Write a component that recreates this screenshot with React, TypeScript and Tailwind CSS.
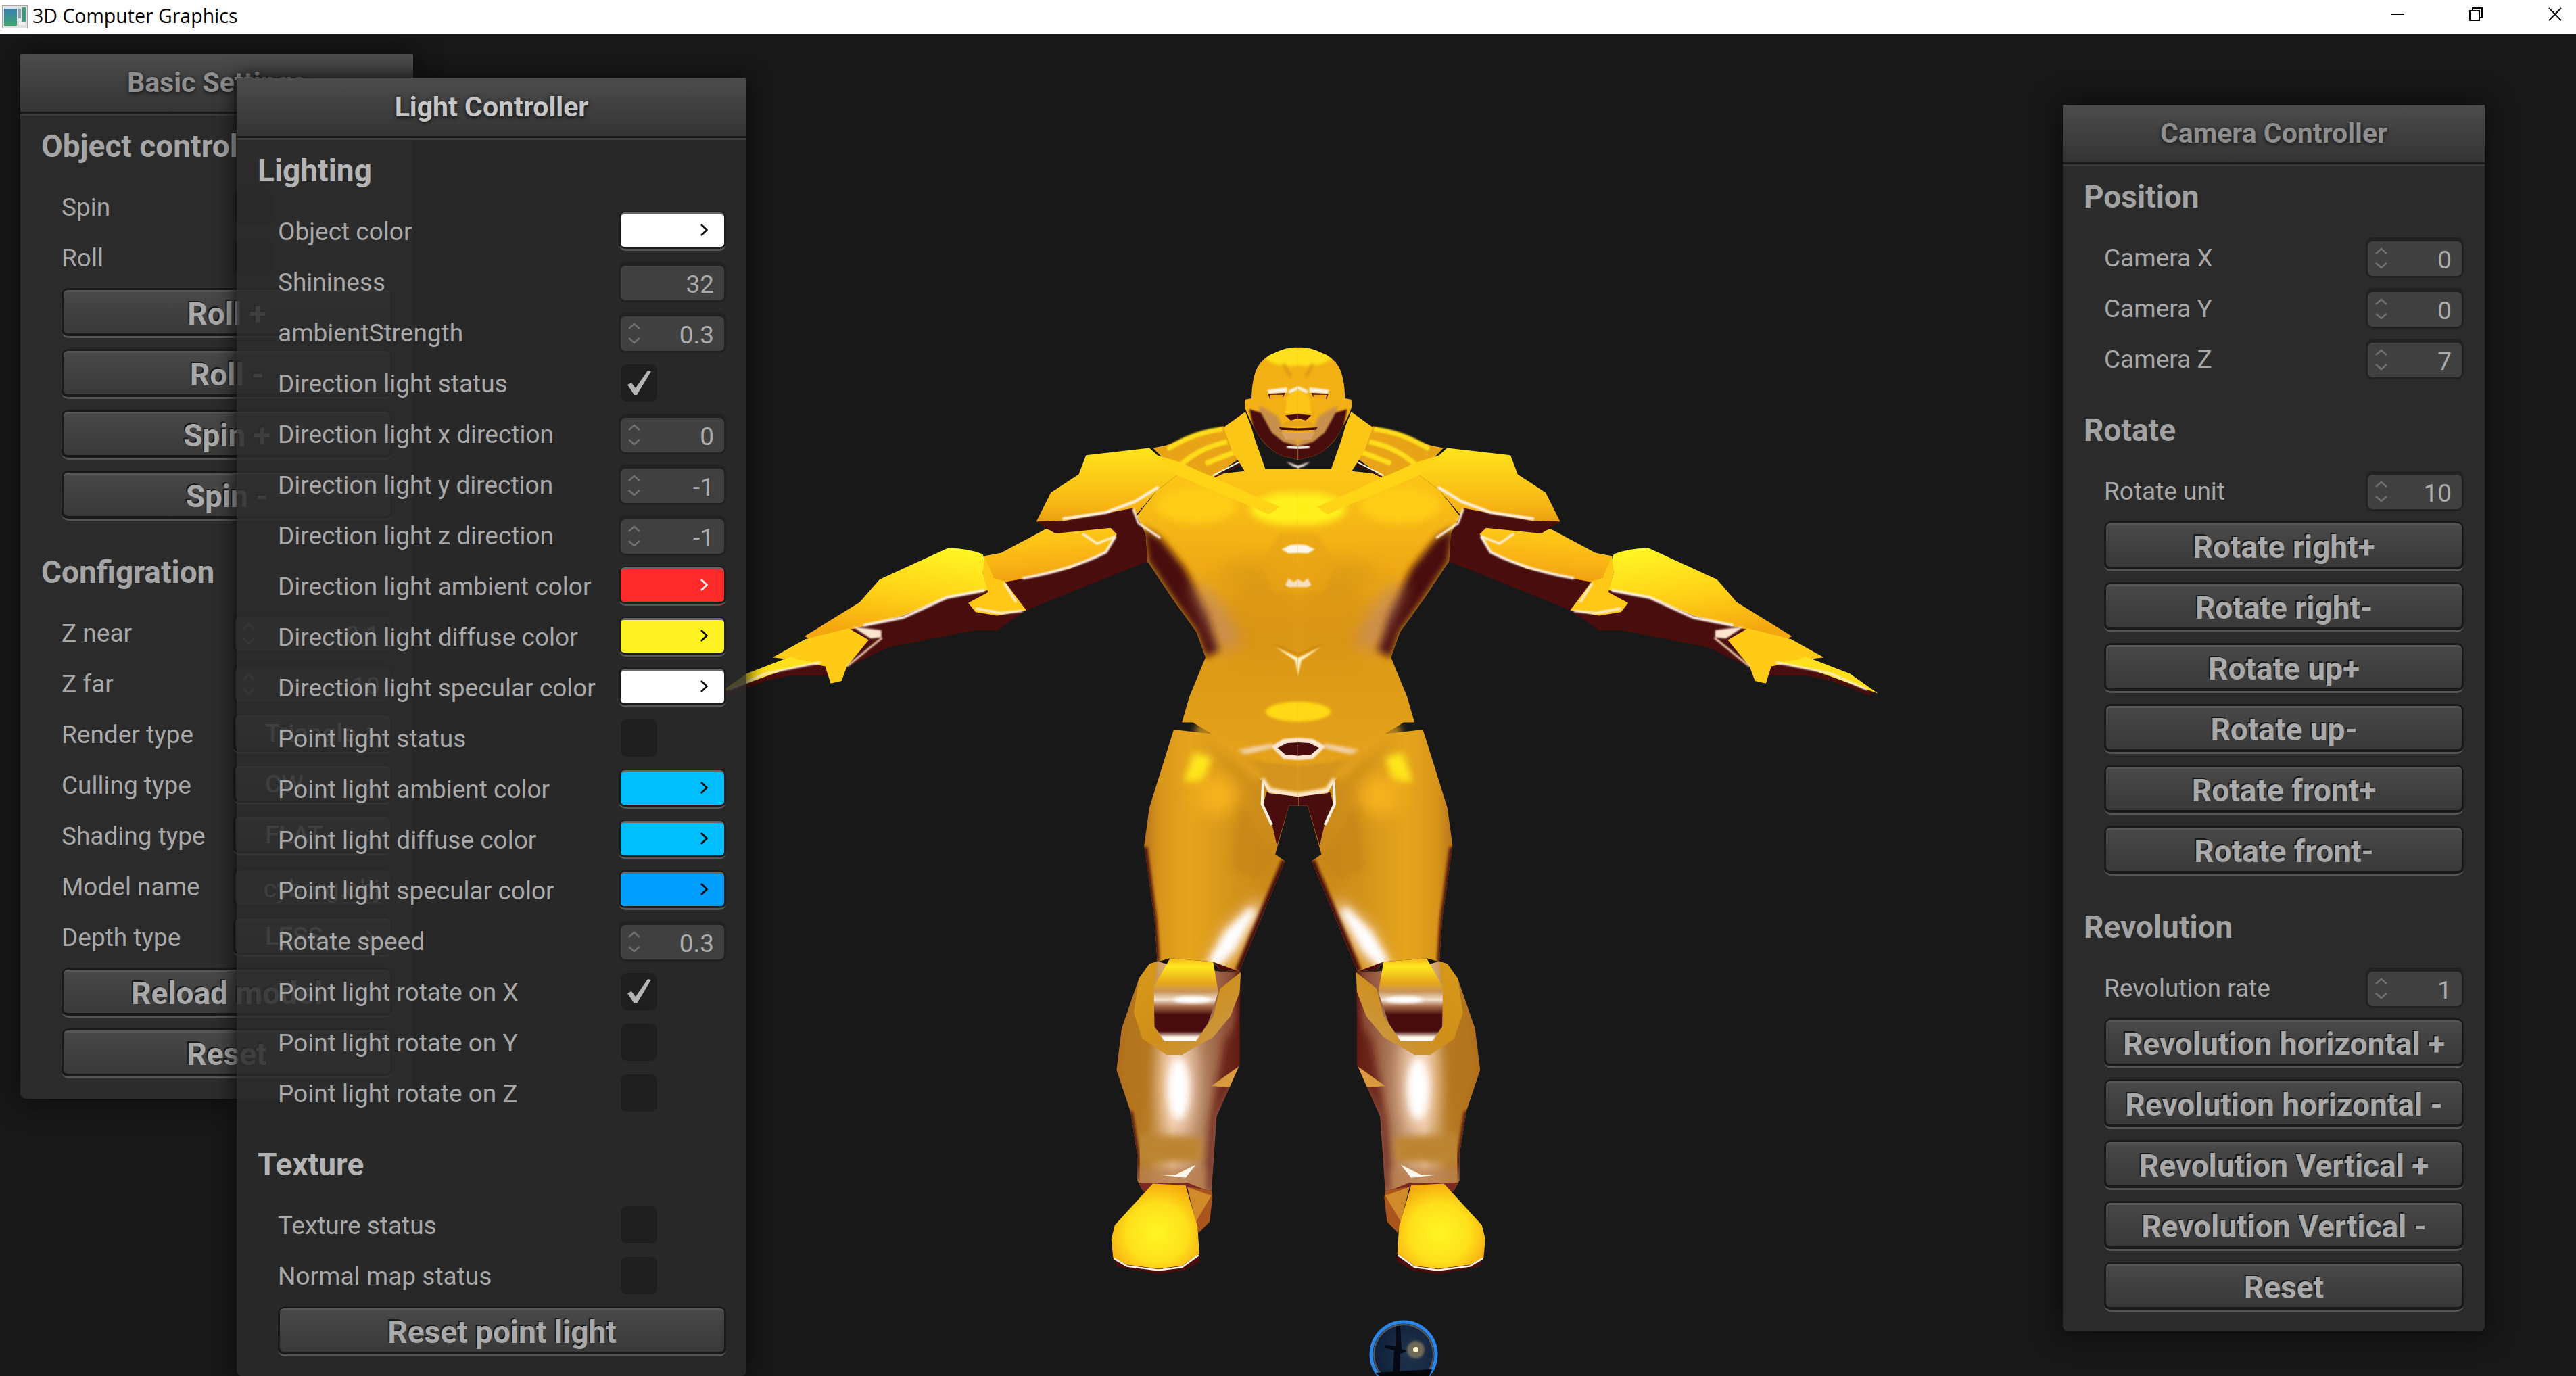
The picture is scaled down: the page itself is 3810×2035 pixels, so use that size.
import React from 'react';

const MAROON = '#4a0d0d';

const Chevrons = () => (
  <svg width="18" height="32" viewBox="0 0 18 32" fill="none" stroke="#707070" strokeWidth="2.5" className="ml-[11px]">
    <path d="M1 9 L9 2 L17 9" />
    <path d="M1 23 L9 30 L17 23" />
  </svg>
);

const Spin: React.FC<{ value?: string; arrows?: boolean; w: string }> = ({ value, arrows = true, w }) => (
  <div className={`h-[60px] ${w} rounded-[10px] bg-[#222222] pt-[6px] pb-[3px] px-[3px]`}>
    <div className="flex h-full items-center rounded-[7px] bg-[#404040] pr-[15px]">
      {arrows && <Chevrons />}
      <span className="ml-auto pt-[4px] text-[37px] leading-none text-[#ababab]">{value}</span>
    </div>
  </div>
);

const Check: React.FC<{ on?: boolean }> = ({ on }) => (
  <div className="ml-[3px] flex h-[55px] w-[54px] items-center justify-center rounded-[9px] bg-[#1f1f1f]">
    {on && (
      <svg width="37" height="37" viewBox="0 0 37 37" fill="#b4b4b4">
        <polygon points="1,21 7,18 13,26 31,0 36,1 15,36 11,36" />
      </svg>
    )}
  </div>
);

const Swatch: React.FC<{ color: string; chevron?: string; w: string }> = ({ color, chevron = '#000000', w }) => (
  <div className={`h-[59px] ${w} rounded-[10px] bg-[#1c1c1c] border-b-[3px] border-[#565656] px-[3px] pt-[2px] pb-[3px]`}>
    <div className="h-full rounded-[6px] bg-[#666666] pt-[3px]">
      <div className="flex h-full items-center justify-end rounded-[5px] pr-[24px]" style={{ backgroundColor: color }}>
        <svg width="11" height="18" viewBox="0 0 11 18" fill="none" stroke={chevron} strokeWidth="2.6" className="mb-[3px]">
          <path d="M1 1 L9.5 9 L1 17" />
        </svg>
      </div>
    </div>
  </div>
);

const Combo: React.FC<{ value: string; w: string }> = ({ value, w }) => (
  <div className={`h-[59px] ${w} rounded-[10px] bg-[#1c1c1c] border-b-[3px] border-[#565656] px-[3px] pt-[2px] pb-[3px]`}>
    <div className="flex h-full items-center rounded-[6px] border-t-[3px] border-[#565656] bg-linear-to-b from-[#4a4a4a] to-[#3a3a3a] pl-[44px] pr-[24px]">
      <span className="text-[37px] font-medium text-[#ababab]">{value}</span>
      <svg width="11" height="18" viewBox="0 0 11 18" fill="none" stroke="#a0a0a0" strokeWidth="2.6" className="ml-auto">
        <path d="M1 1 L9.5 9 L1 17" />
      </svg>
    </div>
  </div>
);

const Button: React.FC<{ label: string }> = ({ label }) => (
  <div className="ml-[30px] h-[74px] rounded-[10px] bg-[#1a1a1a] border-b-[3px] border-[#555555] px-[3px] pt-[3px] pb-[4px]">
    <div className="flex h-full items-center justify-center rounded-[6px] border-t-[3px] border-[#565656] bg-linear-to-b from-[#484848] to-[#393939]">
      <span className="pt-[2px] text-[46px] font-bold leading-none text-[#a9a9a9] [text-shadow:-2px_-2px_0_#1a1a1a]">{label}</span>
    </div>
  </div>
);

const Row: React.FC<{ label: string; children: React.ReactNode }> = ({ label, children }) => (
  <div className="ml-[30px] flex h-[59px] items-center justify-between">
    <span className="whitespace-nowrap pt-[2px] text-[37px] text-[#a8a8a8]">{label}</span>
    {children}
  </div>
);

const Section: React.FC<{ title: string; color: string; first?: boolean; children: React.ReactNode }> = ({
  title,
  color,
  first,
  children,
}) => (
  <section className={first ? '' : 'mt-[46px]'}>
    <h3 className={`flex h-[60px] items-center pt-[1px] text-[46px] font-bold ${color}`}>{title}</h3>
    <div className="mt-[30px] flex flex-col gap-[16px]">{children}</div>
  </section>
);

const Header: React.FC<{ title: string; active?: boolean }> = ({ title, active }) => (
  <div className="relative">
    <div className="flex h-[85px] items-center justify-center rounded-t-[3px] bg-linear-to-b from-[#4c4c4c] to-[#343434]">
      <span
        className={`text-[41px] font-bold [text-shadow:0_2px_6px_#111111] ${active ? 'text-[#c6c6c6]' : 'text-[#8e8e8e]'}`}
      >
        {title}
      </span>
    </div>
    <div className="h-[3px] bg-[#1b1b1b]" />
    <div className="h-[3px] bg-[#3a3a3a]" />
  </div>
);

const BasicSettings = () => {
  const w = 'w-[235px]';
  return (
    <div className="absolute left-[30px] top-[80px] z-10 h-[1545px] w-[581px] rounded-b-[8px] bg-[#2b2b2b] shadow-[0_0_40px_#0a0a0a]">
      <Header title="Basic Settings" />
      <div className="pl-[31px] pr-[31px] pt-[15px]">
        <Section title="Object control" color="text-[#a6a6a6]" first>
          <Row label="Spin">
            <div className={w}>
              <Check />
            </div>
          </Row>
          <Row label="Roll">
            <div className={w}>
              <Check />
            </div>
          </Row>
          {['Roll +', 'Roll -', 'Spin +', 'Spin -'].map((b) => (
            <Button key={b} label={b} />
          ))}
        </Section>
        <Section title="Configration" color="text-[#a6a6a6]">
          <Row label="Z near">
            <Spin value="0.1" w={w} />
          </Row>
          <Row label="Z far">
            <Spin value="10" w={w} />
          </Row>
          <Row label="Render type">
            <Combo value="Triangle" w={w} />
          </Row>
          <Row label="Culling type">
            <Combo value="CW" w={w} />
          </Row>
          <Row label="Shading type">
            <Combo value="FLAT" w={w} />
          </Row>
          <Row label="Model name">
            <Spin value="cyborg.obj" arrows={false} w={w} />
          </Row>
          <Row label="Depth type">
            <Combo value="LESS" w={w} />
          </Row>
          <Button label="Reload model" />
          <Button label="Reset" />
        </Section>
      </div>
    </div>
  );
};

const LightController = () => {
  const w = 'w-[159px]';
  const spin = (label: string, value: string, arrows = true) => (
    <Row key={label} label={label}>
      <Spin value={value} arrows={arrows} w={w} />
    </Row>
  );
  const swatch = (label: string, color: string, chevron?: string) => (
    <Row key={label} label={label}>
      <Swatch color={color} chevron={chevron} w={w} />
    </Row>
  );
  const check = (label: string, on?: boolean) => (
    <Row key={label} label={label}>
      <div className={w}>
        <Check on={on} />
      </div>
    </Row>
  );
  return (
    <div className="absolute left-[350px] top-[116px] z-20 h-[1919px] w-[754px] rounded-b-[8px] bg-[#2b2b2b]/85 shadow-[0_0_30px_#0a0a0a]">
      <Header title="Light Controller" active />
      <div className="pl-[31px] pr-[30px] pt-[15px]">
        <Section title="Lighting" color="text-[#b4b4b4]" first>
          {swatch('Object color', '#ffffff')}
          {spin('Shininess', '32', false)}
          {spin('ambientStrength', '0.3')}
          {check('Direction light status', true)}
          {spin('Direction light x direction', '0')}
          {spin('Direction light y direction', '-1')}
          {spin('Direction light z direction', '-1')}
          {swatch('Direction light ambient color', '#ff2b2b', '#ffffff')}
          {swatch('Direction light diffuse color', '#fff222')}
          {swatch('Direction light specular color', '#ffffff')}
          {check('Point light status')}
          {swatch('Point light ambient color', '#00bfff')}
          {swatch('Point light diffuse color', '#00bfff')}
          {swatch('Point light specular color', '#009fff')}
          {spin('Rotate speed', '0.3')}
          {check('Point light rotate on X', true)}
          {check('Point light rotate on Y')}
          {check('Point light rotate on Z')}
        </Section>
        <Section title="Texture" color="text-[#b4b4b4]">
          {check('Texture status')}
          {check('Normal map status')}
          <Button label="Reset point light" />
        </Section>
      </div>
    </div>
  );
};

const CameraController = () => {
  const w = 'w-[145px]';
  return (
    <div className="absolute left-[3051px] top-[155px] z-10 h-[1814px] w-[624px] rounded-b-[8px] bg-[#2b2b2b] shadow-[0_0_40px_#0a0a0a]">
      <Header title="Camera Controller" />
      <div className="pl-[31px] pr-[31px] pt-[15px]">
        <Section title="Position" color="text-[#a2a2a2]" first>
          <Row label="Camera X">
            <Spin value="0" w={w} />
          </Row>
          <Row label="Camera Y">
            <Spin value="0" w={w} />
          </Row>
          <Row label="Camera Z">
            <Spin value="7" w={w} />
          </Row>
        </Section>
        <Section title="Rotate" color="text-[#a2a2a2]">
          <Row label="Rotate unit">
            <Spin value="10" w={w} />
          </Row>
          {['Rotate right+', 'Rotate right-', 'Rotate up+', 'Rotate up-', 'Rotate front+', 'Rotate front-'].map((b) => (
            <Button key={b} label={b} />
          ))}
        </Section>
        <Section title="Revolution" color="text-[#a2a2a2]">
          <Row label="Revolution rate">
            <Spin value="1" w={w} />
          </Row>
          {[
            'Revolution horizontal +',
            'Revolution horizontal -',
            'Revolution Vertical +',
            'Revolution Vertical -',
            'Reset',
          ].map((b) => (
            <Button key={b} label={b} />
          ))}
        </Section>
      </div>
    </div>
  );
};

const HEAD_PATH =
  'M1533 45 Q1505 42 1470 58 Q1435 70 1418 100 Q1403 130 1402 185 L1385 188 Q1380 205 1388 222 Q1405 262 1430 300 Q1460 335 1490 345 L1533 355 Z';

// left half of the model, drawn twice and mirrored around the centre line
const Figure = () => (
  <svg
    width="1700"
    height="1555"
    viewBox="0 0 1700 1555"
    className="absolute left-[1100px] top-[480px] overflow-visible"
  >
    <defs>
      <filter id="b1" x="-30%" y="-30%" width="160%" height="160%"><feGaussianBlur stdDeviation="1.5" /></filter>
      <filter id="b2" x="-30%" y="-30%" width="160%" height="160%"><feGaussianBlur stdDeviation="4" /></filter>
      <filter id="b3" x="-50%" y="-50%" width="200%" height="200%"><feGaussianBlur stdDeviation="10" /></filter>
      <filter id="b4" x="-60%" y="-60%" width="220%" height="220%"><feGaussianBlur stdDeviation="22" /></filter>
      <linearGradient id="padG" x1="0" y1="0" x2="0" y2="1">
        <stop offset="0" stopColor="#ffe41b" />
        <stop offset="0.7" stopColor="#f8b414" />
        <stop offset="1" stopColor="#d98f12" />
      </linearGradient>
      <linearGradient id="foreG" x1="0.8" y1="0" x2="0.5" y2="1">
        <stop offset="0" stopColor="#fff624" />
        <stop offset="0.55" stopColor="#ffd017" />
        <stop offset="1" stopColor="#f4a70f" />
      </linearGradient>
      <linearGradient id="armG" x1="0.3" y1="0" x2="0.5" y2="1">
        <stop offset="0" stopColor="#ffd218" />
        <stop offset="0.6" stopColor="#fab515" />
        <stop offset="1" stopColor="#ee9f12" />
      </linearGradient>
      <linearGradient id="torsoG" x1="0" y1="0" x2="0" y2="1">
        <stop offset="0" stopColor="#fdc717" />
        <stop offset="0.3" stopColor="#f0aa15" />
        <stop offset="0.62" stopColor="#dd9a17" />
        <stop offset="1" stopColor="#e8a41a" />
      </linearGradient>
      <linearGradient id="thighG" x1="0" y1="0" x2="1" y2="0">
        <stop offset="0" stopColor="#b5741a" />
        <stop offset="0.1" stopColor="#d8951b" />
        <stop offset="0.3" stopColor="#e6a51c" />
        <stop offset="0.6" stopColor="#d2921a" />
        <stop offset="1" stopColor="#c6851a" />
      </linearGradient>
      <linearGradient id="shinG" x1="0" y1="0" x2="1" y2="0">
        <stop offset="0" stopColor="#a86418" />
        <stop offset="0.25" stopColor="#b98030" />
        <stop offset="0.45" stopColor="#e8c09a" />
        <stop offset="0.7" stopColor="#b07e5c" />
        <stop offset="0.93" stopColor="#8a4a34" />
        <stop offset="1" stopColor="#5a1410" />
      </linearGradient>
      <linearGradient id="kneeG" x1="0" y1="0" x2="0" y2="1">
        <stop offset="0" stopColor="#f6b516" />
        <stop offset="0.1" stopColor="#ffe81e" />
        <stop offset="0.3" stopColor="#e6a61a" />
        <stop offset="0.4" stopColor="#c89458" />
        <stop offset="0.5" stopColor="#f0e0d0" />
        <stop offset="0.58" stopColor="#a86a4a" />
        <stop offset="0.68" stopColor={MAROON} />
        <stop offset="0.88" stopColor={MAROON} />
        <stop offset="0.95" stopColor="#fff2e4" />
        <stop offset="1" stopColor="#ffffff" />
      </linearGradient>
      <linearGradient id="cuffG" x1="0" y1="0" x2="1" y2="1">
        <stop offset="0" stopColor="#d89a1a" />
        <stop offset="0.5" stopColor="#cf8f18" />
        <stop offset="1" stopColor="#c99a58" />
      </linearGradient>
      <radialGradient id="shoeG" cx="0.52" cy="0.58" r="0.62">
        <stop offset="0" stopColor="#fff624" />
        <stop offset="0.55" stopColor="#ffe01b" />
        <stop offset="1" stopColor="#f4a50e" />
      </radialGradient>
      <radialGradient id="sphereG" cx="0.6" cy="0.5" r="0.7">
        <stop offset="0" stopColor="#20344f" />
        <stop offset="1" stopColor="#0c1a33" />
      </radialGradient>
      <clipPath id="torsoClip">
        <path d="M1085 510 L1140 440 L1200 395 L1300 395 L1440 380 L1533 380 L1533 1285 L1450 1275 L1430 1240 L1360 1170 L1290 1110 L1240 1080 L1210 1080 L1230 1010 L1275 900 L1250 830 L1185 740 L1115 635 L1110 560 Z" />
      </clipPath>
      <clipPath id="thighClip">
        <path d="M306 -41 L293 0 L235 185 L220 295 L250 510 L258 632 L295 622 L420 632 L440 655 L495 660 L628 340 L600 320 L640 180 L667 180 L667 0 Z" />
      </clipPath>
      <clipPath id="shinClip">
        <path d="M235 638 L258 630 L290 640 L440 660 L500 660 L497 800 L497 930 L430 1080 L415 1295 L345 1285 L218 1298 L200 1265 L200 1190 L180 1065 L140 945 L155 825 L205 680 Z" />
      </clipPath>
      <clipPath id="headClip">
        <path d={HEAD_PATH} />
      </clipPath>

      <g id="upperHalf">
        {/* underside of the arm */}
        <path
          d="M860 555 L1085 510 L1120 560 L1115 635 L940 705 L780 770 L700 825 L640 825 L400 872 L290 925 L230 950 L110 950 L-70 1003 L8 960 L300 820 Z"
          fill={MAROON}
        />
        {/* torso */}
        <path d="M1085 510 L1140 440 L1200 395 L1300 395 L1440 380 L1533 380 L1533 1285 L1450 1275 L1430 1240 L1360 1170 L1290 1110 L1240 1080 L1210 1080 L1230 1010 L1275 900 L1250 830 L1185 740 L1115 635 L1110 560 Z" fill="url(#torsoG)" />
        <g clipPath="url(#torsoClip)">
          <ellipse cx="1510" cy="490" rx="110" ry="45" fill="#fff01c" filter="url(#b3)" />
          <ellipse cx="1250" cy="480" rx="110" ry="50" fill="#ffcc18" filter="url(#b3)" />
          <ellipse cx="1440" cy="800" rx="120" ry="110" fill="#d48f18" opacity="0.55" filter="url(#b4)" />
          <path d="M1100 540 L1115 635 L1185 740 L1250 830 L1275 900 L1315 880 L1285 780 L1215 650 L1150 570 Z" fill={MAROON} filter="url(#b3)" />
          <path d="M1230 690 L1300 720 L1375 860 L1320 890 Z" fill="#c58a62" opacity="0.8" filter="url(#b4)" />
          <path d="M1330 640 L1440 620 L1460 730 L1300 700 Z" fill="#cf9018" opacity="0.45" filter="url(#b4)" />
          <ellipse cx="1531" cy="1050" rx="90" ry="28" fill="#ffd916" filter="url(#b2)" />
          <path d="M1360 1155 L1460 1138 L1460 1150 L1380 1170 Z" fill="#f2d0a8" filter="url(#b2)" />
          <path d="M1360 1170 L1430 1240 L1480 1270 L1533 1270 L1533 1200 L1440 1190 Z" fill="#c98c24" opacity="0.6" filter="url(#b2)" />
          {/* chest plates */}
          <path d="M1430 640 L1480 560 L1533 560 L1533 720 L1460 720 Z" fill="#e7a318" opacity="0.6" filter="url(#b2)" />
          <path d="M1485 602 L1510 590 L1535 588 L1535 612 L1505 613 Z" fill="#fff6ea" filter="url(#b1)" />
          <path d="M1495 700 L1505 682 L1518 692 L1535 682 L1535 706 L1505 706 Z" fill="#f6e0c0" filter="url(#b1)" />
          {/* abdomen mark */}
          <path d="M1470 872 L1533 902 L1533 955 L1522 908 Z" fill="#fff3c8" filter="url(#b1)" />
          <path d="M1460 860 L1533 890 L1533 895 L1480 872 Z" fill="#b97d14" opacity="0.6" filter="url(#b1)" />
          {/* navel */}
          <path d="M1456 1146 L1490 1125 L1535 1122 L1535 1184 L1490 1180 Z" fill="#fbe6d4" filter="url(#b1)" />
          <path d="M1474 1150 L1500 1137 L1535 1135 L1535 1172 L1495 1168 Z" fill={MAROON} />
          {/* lower arc */}
          <path d="M1430 1235 L1450 1268 L1520 1280 L1535 1280" fill="none" stroke="#ffeedd" strokeWidth="14" filter="url(#b2)" />
        </g>
        {/* soften the seam between the pelvis and the thigh */}
        <path d="M1250 1095 L1300 1120 L1365 1175 L1425 1235" fill="none" stroke="#e3a11c" strokeWidth="34" opacity="0.8" filter="url(#b3)" />
        {/* straps */}
        <path d="M1130 322 L1165 315 L1325 262 L1345 325 L1370 350 L1300 400 L1200 395 Z" fill="#e8a416" />
        <path d="M1170 325 Q1240 280 1322 270 M1205 370 Q1260 320 1335 305 M1275 365 L1365 330" fill="none" stroke="#ffdc1a" strokeWidth="14" filter="url(#b1)" />
        <path d="M1295 398 L1370 360" stroke="#fff0e0" strokeWidth="4" />
        <path d="M1300 402 L1372 368" stroke={MAROON} strokeWidth="4" />
        {/* strip across the chest */}
        <path d="M1135 340 L1200 360 L1480 485 L1450 505 L1190 395 Z" fill="#ffd416" />
        {/* upper arm */}
        <path d="M835 545 L860 555 L1000 530 L1030 560 L1000 610 L900 655 L760 685 L720 692 L690 680 L665 650 L665 620 L710 612 Z" fill="url(#armG)" />
        <path d="M770 682 Q900 660 1000 610 L1026 566" fill="none" stroke="#fff2e4" strokeWidth="7" filter="url(#b1)" />
        <path d="M935 558 L975 586 L1026 566" fill="none" stroke="#fff2e4" strokeWidth="6" filter="url(#b1)" />
        {/* forearm */}
        <path d="M565 598 Q620 600 660 615 L668 640 L660 665 L675 715 L560 735 L440 785 L330 815 L180 848 L168 842 L320 748 L375 685 Z" fill="url(#foreG)" />
        <path d="M330 812 L440 790 L560 735 L665 715" fill="none" stroke="#fff2e4" strokeWidth="8" filter="url(#b1)" />
        <path d="M300 815 L350 848 L380 845 L380 825 Z" fill="#fde4d0" filter="url(#b1)" />
        {/* wrist cuff */}
        <path d="M665 620 L690 680 L720 690 L780 770 L700 785 L640 775 L620 750 L675 720 L660 665 Z" fill="#ffc817" />
        <path d="M640 765 L710 778 L770 772" fill="none" stroke="#fff2e4" strokeWidth="6" filter="url(#b1)" />
        <path d="M720 695 L752 748" fill="none" stroke="#fff2e4" strokeWidth="6" filter="url(#b1)" />
        {/* hand */}
        <path d="M80 900 L170 850 L290 820 L345 852 L285 925 L270 965 L240 972 L225 925 L120 905 Z" fill="#ffcb16" />
        <path d="M285 925 L382 846" stroke="#fde0c0" strokeWidth="5" filter="url(#b1)" />
        <path d="M-70 1000 L8 945 L130 898 L145 905 L210 915 L110 935 Z" fill="#ffe01c" />
        <path d="M-40 990 L60 945 L212 914" fill="none" stroke="#fff2e4" strokeWidth="5" filter="url(#b1)" />
        <path d="M-50 1003 L60 960 L220 930" fill="none" stroke={MAROON} strokeWidth="8" />
        {/* shoulder pad */}
        <path d="M945 342 L1120 322 L1200 395 L1140 440 L1085 505 L960 530 L860 555 L808 525 L848 445 L925 395 Z" fill="url(#padG)" />
        <path d="M808 525 L890 522 L1075 488 L1092 535 L860 558 Z" fill={MAROON} />
        <path d="M880 518 L1000 500 L1080 470 L1145 430" fill="none" stroke="#fff2e4" strokeWidth="8" filter="url(#b1)" />
        <path d="M1075 490 L1090 530 L1150 570" fill="none" stroke="#fff2e4" strokeWidth="6" filter="url(#b1)" />
        {/* collar */}
        <path d="M1325 265 L1385 222 L1400 260 L1412 300 L1440 380 L1395 405 L1345 325 Z" fill="#fcc617" />
        {/* head */}
        <path d={HEAD_PATH} fill="#f3b015" />
        <g clipPath="url(#headClip)">
          <ellipse cx="1510" cy="70" rx="70" ry="26" fill="#ffe01b" filter="url(#b2)" />
          <path d="M1490 90 L1510 125" stroke="#cf9016" strokeWidth="6" filter="url(#b2)" />
          {/* shadowed jaw with a pale cheek on its upper edge */}
          <path d="M1425 205 L1475 235 L1495 285 L1533 305 L1533 330 L1470 310 L1420 250 Z" fill="#c78f4c" filter="url(#b2)" />
          <path d="M1396 215 L1428 225 L1458 280 L1490 305 L1533 318 L1533 360 L1470 345 L1410 280 Z" fill={MAROON} filter="url(#b1)" />
          <path d="M1445 162 L1500 155 L1500 168 L1450 172 Z" fill="#fff2e4" filter="url(#b1)" />
          <path d="M1448 172 L1495 170 L1490 180 L1452 186 Z" fill={MAROON} />
          <path d="M1452 175 L1490 175 L1485 184 L1455 186 Z" fill="#f0a815" />
          <path d="M1500 180 L1533 160 L1533 225 L1495 228 Z" fill="#fcc517" filter="url(#b1)" />
          <path d="M1505 168 L1533 155" stroke="#fff2e4" strokeWidth="8" filter="url(#b1)" />
          <path d="M1495 232 L1533 228 L1533 240 L1510 246 Z" fill={MAROON} />
          <path d="M1495 250 L1533 246 L1533 262 L1485 262 Z" fill="#e8a418" />
          <path d="M1478 265 L1533 268 L1533 274 L1482 272 Z" fill={MAROON} />
          <path d="M1485 278 L1533 280 L1533 298 L1495 298 Z" fill="#d8a060" />
          <path d="M1500 318 L1533 322" stroke="#fff6ea" strokeWidth="8" filter="url(#b1)" />
        </g>
        <path d="M1498 360 L1533 372 L1533 378 L1515 372 Z" fill="#fff2e4" filter="url(#b1)" />
      </g>

      <g id="legHalf">
        {/* thigh */}
        <path d="M306 -41 L293 0 L235 185 L220 295 L250 510 L258 632 L295 622 L420 632 L440 655 L495 660 L628 340 L600 320 L640 180 L667 180 L667 0 Z" fill="url(#thighG)" />
        <g clipPath="url(#thighClip)">
          <path d="M365 25 L415 40 L395 110 L335 110 Z" fill="#ffe81c" filter="url(#b3)" />
          <ellipse cx="430" cy="150" rx="60" ry="60" fill="#f5b01c" filter="url(#b4)" />
          <path d="M500 170 L580 310 L600 320 L560 400 L470 360 Z" fill="#c18118" opacity="0.5" filter="url(#b3)" />
          <path d="M575 140 L667 150 L667 185 L640 180 L605 295 L590 230 L565 175 Z" fill={MAROON} filter="url(#b1)" />
          <path d="M565 100 L562 175 L590 235" fill="none" stroke="#fff2e4" strokeWidth="8" filter="url(#b1)" />
          <path d="M400 640 L455 530 L545 450 L570 470 L490 610 L435 660 Z" fill="#f2c9a2" opacity="0.9" filter="url(#b4)" />
          <path d="M405 630 L455 545 L525 475 L545 485 L480 600 L430 650 Z" fill="#ffffff" filter="url(#b3)" />
          <path d="M495 660 L630 340" fill="none" stroke={MAROON} strokeWidth="24" filter="url(#b2)" />
          <path d="M222 300 L250 510 L258 632" fill="none" stroke={MAROON} strokeWidth="14" filter="url(#b2)" />
          <path d="M420 632 L495 660 L440 700 Z" fill={MAROON} />
        </g>
        {/* shin */}
        <path d="M235 638 L258 630 L290 640 L440 660 L500 660 L497 800 L497 930 L430 1080 L415 1295 L345 1285 L218 1298 L200 1265 L200 1190 L180 1065 L140 945 L155 825 L205 680 Z" fill="url(#shinG)" />
        <g clipPath="url(#shinClip)">
          <path d="M140 945 L155 825 L205 680 L250 800 L235 1000 L220 1200 L180 1065 Z" fill="#b5761c" filter="url(#b4)" />
          <ellipse cx="320" cy="980" rx="55" ry="150" fill="#ffe0c8" opacity="0.55" filter="url(#b4)" />
          <ellipse cx="320" cy="1000" rx="32" ry="90" fill="#ffffff" filter="url(#b3)" />
          <path d="M200 1130 L390 1140 L390 1210 L200 1215 Z" fill="#bd8530" filter="url(#b3)" />
          <path d="M455 860 L500 800 L500 930 L430 1080 L415 1300 L395 1290 L410 1100 Z" fill="#5e1610" opacity="0.75" filter="url(#b3)" />
          <path d="M415 992 L495 935 L470 996 Z" fill="#d89a3c" filter="url(#b1)" />
          <path d="M180 1065 L200 1190 L200 1265" fill="none" stroke={MAROON} strokeWidth="12" filter="url(#b2)" />
          <path d="M200 1230 L400 1230 L400 1300 L200 1300 Z" fill="#b9804f" opacity="0.8" filter="url(#b3)" />
          <path d="M270 1250 L310 1250 L370 1220 L340 1258 Z" fill="#fff6ea" filter="url(#b1)" />
          <path d="M200 1272 L345 1272 L415 1300 L218 1300 Z" fill="#7a2c20" filter="url(#b1)" />
        </g>
        {/* knee cuff */}
        <path d="M235 638 L258 632 L248 705 L250 820 L275 862 L370 862 L420 790 L440 710 L500 662 L497 720 L470 790 L420 850 L330 902 L285 902 L215 855 L190 780 L205 680 Z" fill="url(#cuffG)" />
        {/* knee plate */}
        <path d="M295 622 L420 632 L435 720 L405 810 L370 862 L280 862 L250 820 L248 705 Z" fill="url(#kneeG)" />
        <ellipse cx="360" cy="742" rx="55" ry="10" fill="#ffffff" filter="url(#b2)" />
        {/* ankle */}
        <path d="M345 1285 L415 1295 L418 1315 L410 1385 L378 1418 L370 1385 Z" fill="#a8541c" />
        <path d="M345 1285 L415 1310 L370 1385 Z" fill="#d08a2c" filter="url(#b1)" />
        {/* shoe */}
        <path d="M125 1462 L140 1515 L260 1537 L335 1527 L382 1502 L380 1470 Z" fill={MAROON} />
        <path d="M245 1275 L340 1280 L375 1400 L380 1478 L330 1513 L262 1522 L170 1510 L130 1490 L125 1435 L135 1395 Z" fill="url(#shoeG)" />
        <path d="M132 1492 L170 1514 L262 1526 L330 1517 L378 1482" fill="none" stroke="#fff2e4" strokeWidth="5" filter="url(#b1)" />
      </g>
    </defs>

    {/* legs first, the pelvis sits over them */}
    <g transform="translate(480,620) scale(0.5102)">
      <use href="#legHalf" />
      <use href="#legHalf" transform="translate(1334,0) scale(-1,1)" />
    </g>
    <g transform="translate(0,10) scale(0.5357)">
      <use href="#upperHalf" />
      <use href="#upperHalf" transform="translate(3062,0) scale(-1,1)" />
    </g>

    {/* point light sphere */}
    <g transform="translate(976,1523)">
      <circle r="48" fill="url(#sphereG)" stroke="#2a86ea" strokeWidth="5" />
      <circle r="44" fill="none" stroke="#5a5a5a" strokeWidth="2" />
      <path d="M-11 -42 L-5 -42 L-3 -8 L6 -5 L-5 -1 L-6 30 L-16 30 L-14 -6 L-29 -10 L-27 -14 L-12 -12 Z" fill="#060a14" />
      <path d="M-42 27 L42 22 L38 32 L-36 32 Z" fill="#05060a" />
      <circle cx="18" cy="-7" r="13" fill="#b09a60" opacity="0.55" filter="url(#b1)" />
      <circle cx="18" cy="-7" r="4" fill="#fff2c8" />
    </g>
  </svg>
);

const TitleBar = () => (
  <div className="relative z-30 flex h-[50px] items-center bg-white">
    <svg width="38" height="34" viewBox="0 0 38 34" className="ml-[3px]">
      <rect x="0.5" y="0.5" width="37" height="33" fill="#dfe3e6" stroke="#a6a6a6" />
      <defs>
        <linearGradient id="iconG" x1="0" y1="0" x2="0" y2="1">
          <stop offset="0" stopColor="#3a7fb0" />
          <stop offset="1" stopColor="#3fa870" />
        </linearGradient>
      </defs>
      <rect x="3" y="5" width="19" height="25" fill="url(#iconG)" />
      <rect x="24" y="5" width="4" height="14" fill="#8aa0a8" />
      <rect x="30" y="3" width="5" height="22" fill="#3f9a80" />
      <rect x="24" y="24" width="11" height="6" fill="#f0f0f0" stroke="#c0c0c0" strokeWidth="0.5" />
    </svg>
    <span className="mb-[3px] ml-[7px] font-['Open_Sans',sans-serif] text-[28.5px] leading-none text-black">3D Computer Graphics</span>
    <svg width="20" height="2" viewBox="0 0 20 2" className="mb-[8px] ml-auto mr-[96px]">
      <rect width="20" height="2" fill="#000000" />
    </svg>
    <svg width="20" height="20" viewBox="0 0 20 20" fill="none" stroke="#000000" strokeWidth="2" className="mb-[8px] mr-[97px]">
      <rect x="1" y="5" width="14" height="14" />
      <path d="M5 5 V1 H19 V15 H15" />
    </svg>
    <svg width="20" height="20" viewBox="0 0 20 20" fill="none" stroke="#000000" strokeWidth="1.8" className="mb-[8px] mr-[21px]">
      <path d="M1 1 L19 19 M19 1 L1 19" />
    </svg>
  </div>
);

const App: React.FC = () => {
  return (
    <div className="relative h-[2035px] w-[3810px] overflow-hidden bg-[#181818] font-['Roboto',sans-serif]">
      <TitleBar />
      <Figure />
      <BasicSettings />
      <CameraController />
      <LightController />
    </div>
  );
};

export default App;
